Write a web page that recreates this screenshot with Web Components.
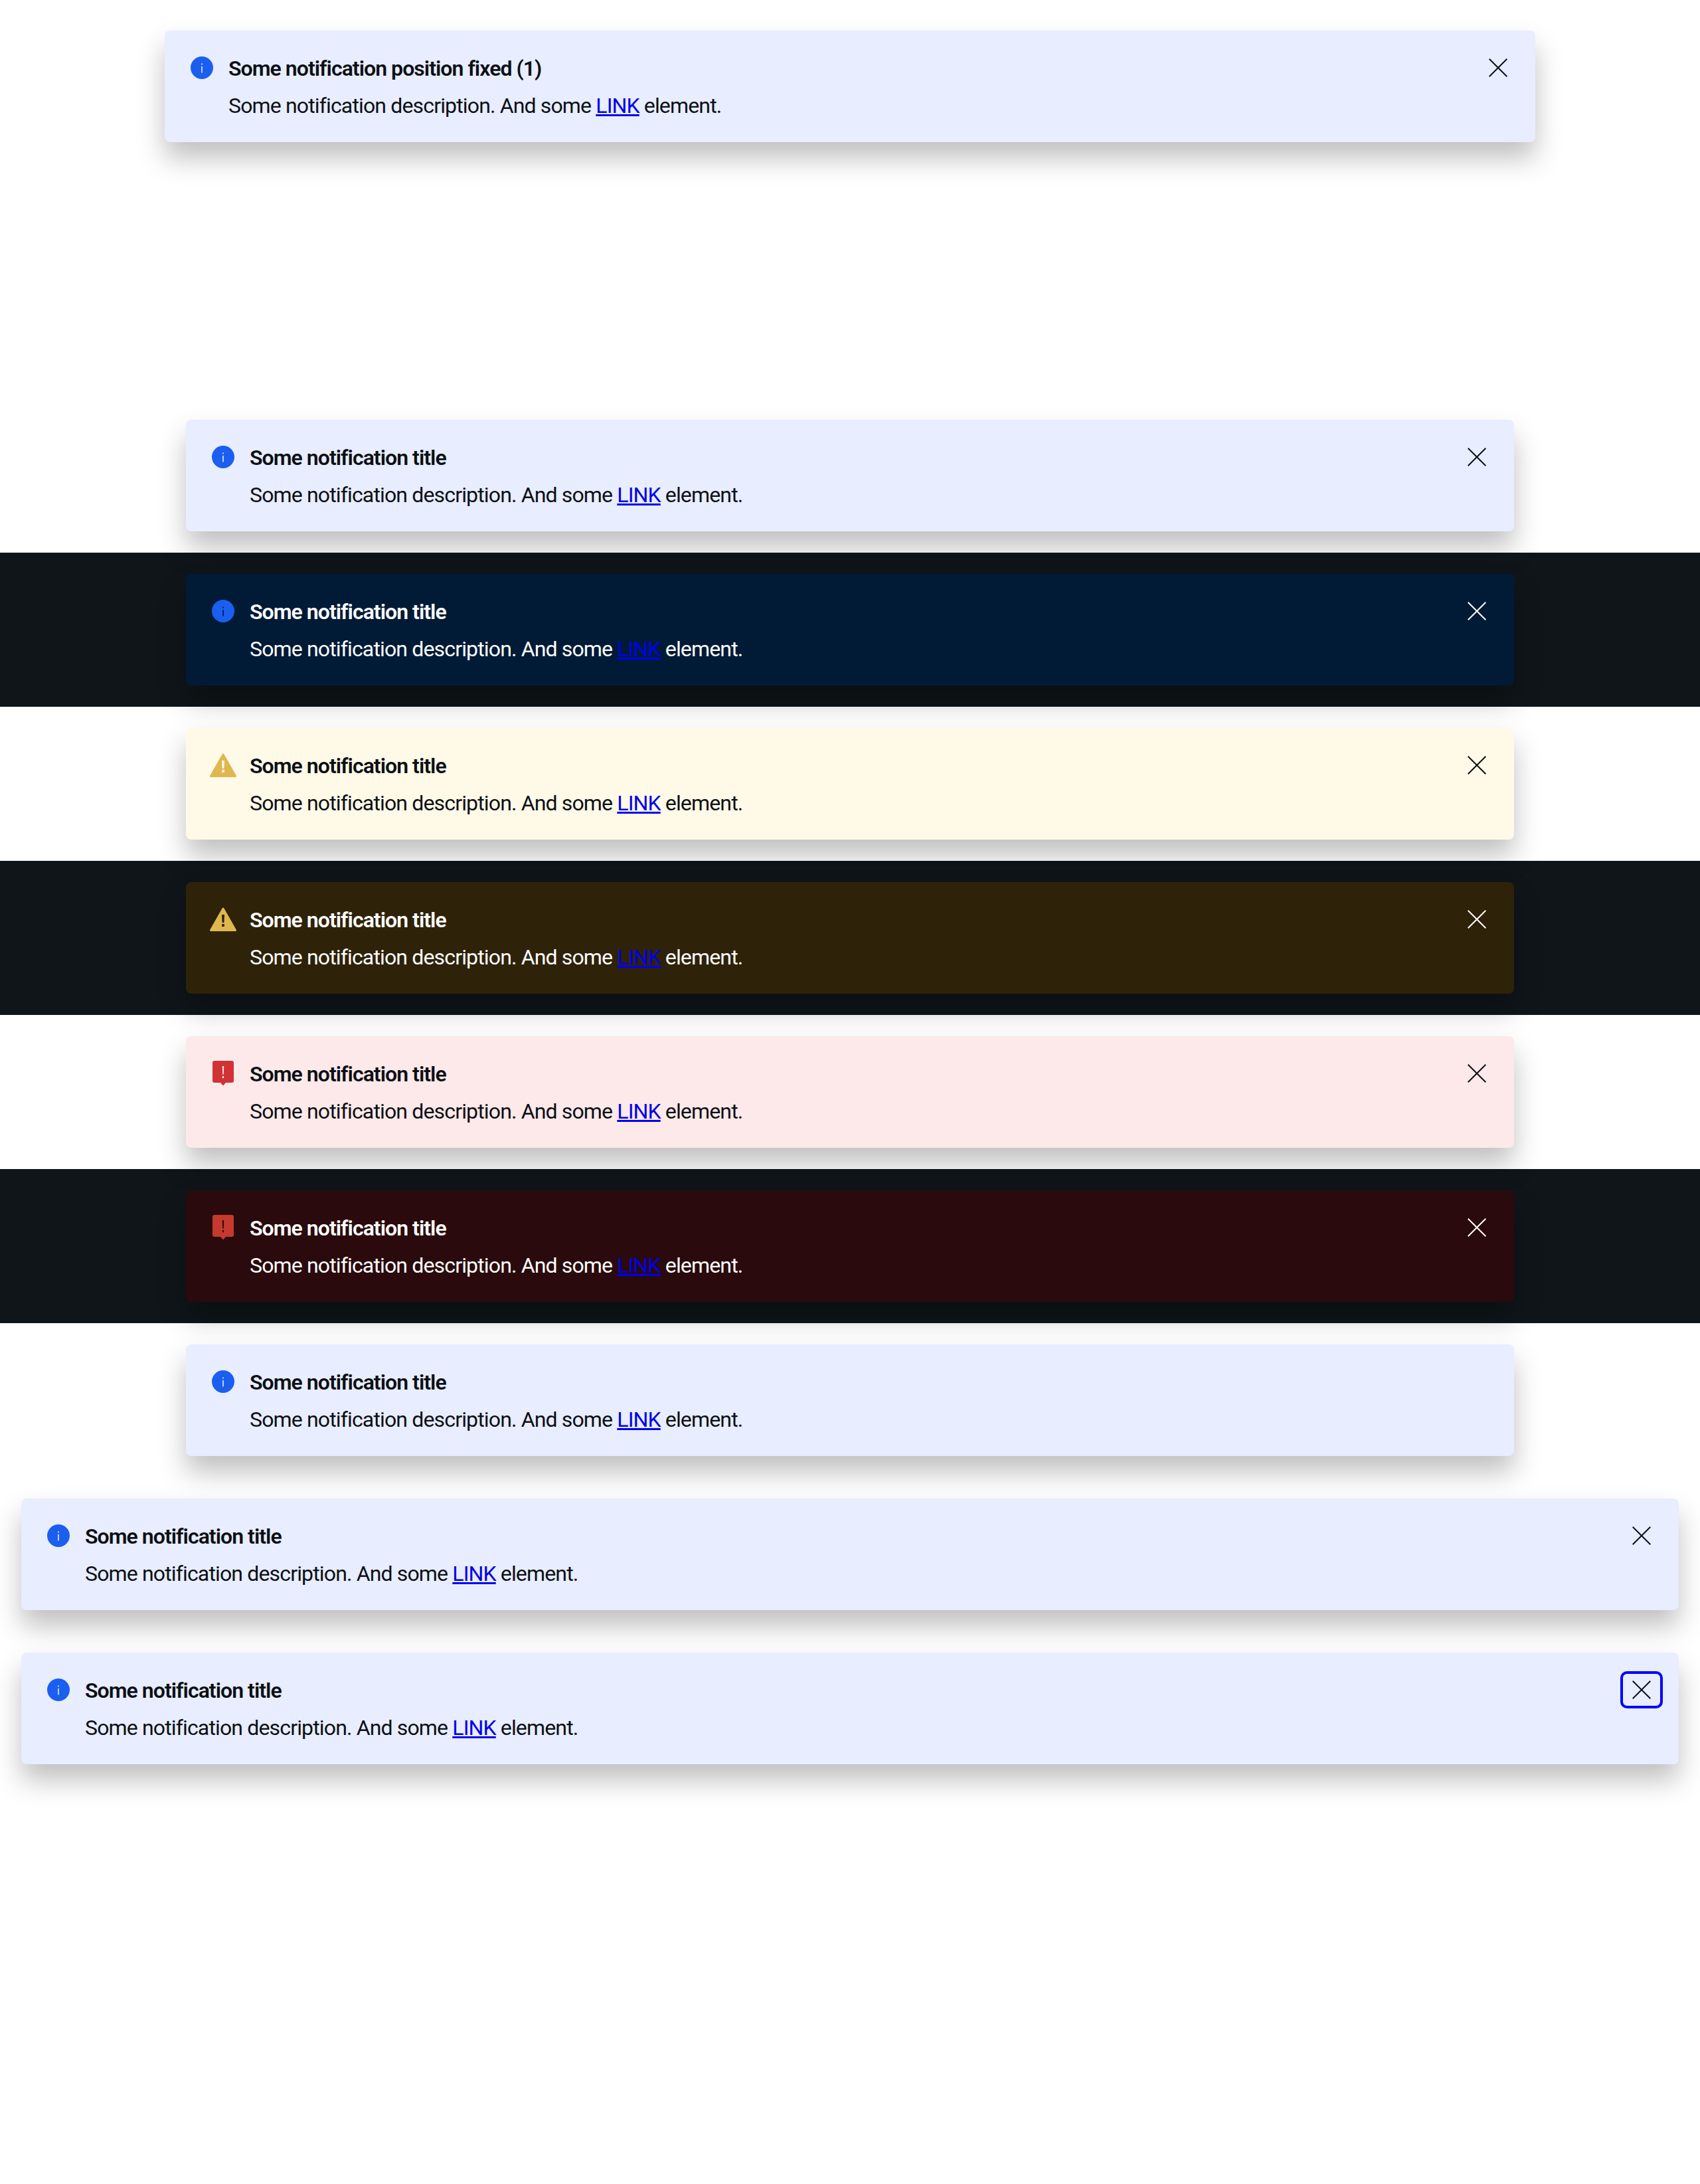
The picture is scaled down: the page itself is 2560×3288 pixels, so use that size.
<!DOCTYPE html>
<html lang="en">
<head>
  <meta charset="UTF-8">
  <title>Notifications</title>
  <style>
    html, body { margin: 0; background: #fff; }
    body { font-family: Roboto, "Liberation Sans", sans-serif; min-height: 3288px; }
    .fixed-spot { height: 600px; padding-top: 46px; box-sizing: border-box; }
  </style>
</head>
<body>
  <template id="rowTpl">
    <style>
      :host { display: flex; justify-content: center; padding: 32px; height: 168px; color: #0c1014; }
      :host([dark]) { background: #0f1519; color: #fff; }
    </style>
    <slot></slot>
  </template>

  <template id="noteTpl">
    <style>
      :host {
        display: flex; flex: 1 1 auto; box-sizing: border-box; height: 168px; max-width: 2000px;
        padding: 32px 28px 32px 32px; gap: 16px; border-radius: 8px;
        background: var(--bg); box-shadow: 0 24px 40px rgba(0,0,0,.25);
        font-size: 32px; line-height: 48px; letter-spacing: -.85px;
        --bg: #e8edff; --mark: #e8edff; --err: #d13236;
      }
      :host([wide]) { max-width: none; }
      :host([pos]) { max-width: 2064px; }
      :host([kind="info"][dark]) { --bg: #011b36; --mark: #011b36; }
      :host([kind="warning"]) { --bg: #fff9e8; --mark: #fff9e8; }
      :host([kind="warning"][dark]) { --bg: #2e2209; --mark: #2e2209; }
      :host([kind="error"]) { --bg: #fde9ea; --mark: #fde9ea; }
      :host([kind="error"][dark]) { --bg: #2a0a0c; --mark: #2a0a0c; --err: #c43a2e; }
      .icon { flex: none; width: 48px; height: 48px; }
      .icon svg { display: block; width: 48px; height: 48px; }
      .body { flex: 1; min-width: 0; display: flex; flex-direction: column; gap: 8px; padding-top: 1px; }
      .title { font-weight: 600; letter-spacing: -.95px; }
      button {
        flex: none; width: 56px; height: 48px; padding: 0; border: 0; background: none;
        color: inherit; display: flex; align-items: center; justify-content: center; border-radius: 6px;
      }
      button svg { display: block; width: 28px; height: 28px; }
      :host([no-close]) button { display: none; }
      :host([focused]) button { outline: 4px solid #00f; }
    </style>
    <div class="icon"></div>
    <div class="body">
      <div class="title"><slot name="title"></slot></div>
      <div><slot></slot></div>
    </div>
    <button type="button" aria-label="Close">
      <svg viewBox="0 0 28 28" fill="none" stroke="currentColor" stroke-width="2"><path d="M.7.7l26.6 26.6M27.3.7L.7 27.3"/></svg>
    </button>
  </template>

  <div class="fixed-spot" style="display:flex;justify-content:center;color:#0c1014">
    <ui-notification kind="info" pos>
      <span slot="title">Some notification position fixed (1)</span>
      Some notification description. And some <a href="#">LINK</a> element.
    </ui-notification>
  </div>

  <demo-row><ui-notification kind="info"><span slot="title">Some notification title</span>Some notification description. And some <a href="#">LINK</a> element.</ui-notification></demo-row>
  <demo-row dark><ui-notification kind="info" dark><span slot="title">Some notification title</span>Some notification description. And some <a href="#">LINK</a> element.</ui-notification></demo-row>
  <demo-row><ui-notification kind="warning"><span slot="title">Some notification title</span>Some notification description. And some <a href="#">LINK</a> element.</ui-notification></demo-row>
  <demo-row dark><ui-notification kind="warning" dark><span slot="title">Some notification title</span>Some notification description. And some <a href="#">LINK</a> element.</ui-notification></demo-row>
  <demo-row><ui-notification kind="error"><span slot="title">Some notification title</span>Some notification description. And some <a href="#">LINK</a> element.</ui-notification></demo-row>
  <demo-row dark><ui-notification kind="error" dark><span slot="title">Some notification title</span>Some notification description. And some <a href="#">LINK</a> element.</ui-notification></demo-row>
  <demo-row><ui-notification kind="info" no-close><span slot="title">Some notification title</span>Some notification description. And some <a href="#">LINK</a> element.</ui-notification></demo-row>
  <demo-row><ui-notification kind="info" wide><span slot="title">Some notification title</span>Some notification description. And some <a href="#">LINK</a> element.</ui-notification></demo-row>
  <demo-row><ui-notification kind="info" wide focused><span slot="title">Some notification title</span>Some notification description. And some <a href="#">LINK</a> element.</ui-notification></demo-row>

  <script>
    // icon artwork for each kind, drawn in a 48 box
    const ICONS = {
      info: `<circle cx="24" cy="24" r="17" fill="#1a5ff0"/>
        <rect x="23.2" y="22" width="1.6" height="9.5" fill="var(--mark)"/>
        <rect x="23.2" y="17.5" width="1.6" height="2" fill="var(--mark)"/>`,
      warning: `<path d="M24 8L42.5 40.5H5.5Z" fill="#dfb74f" stroke="#dfb74f" stroke-width="3" stroke-linejoin="round"/>
        <path d="M22 17h4l-.6 12h-2.8z" fill="var(--mark)"/>
        <rect x="22.2" y="31" width="3.6" height="4" fill="var(--mark)"/>`,
      error: `<path d="M11 5h26a3 3 0 0 1 3 3v27a3 3 0 0 1-3 3h-9l-4 4.5-4-4.5h-9a3 3 0 0 1-3-3V8a3 3 0 0 1 3-3z" fill="var(--err)"/>
        <path d="M22.8 13h2.4l-.4 12.5h-1.6z" fill="var(--mark)"/>
        <rect x="22.9" y="28" width="2.2" height="3.2" fill="var(--mark)"/>`
    };

    class DemoRow extends HTMLElement {
      constructor() {
        super();
        this.attachShadow({ mode: 'open' });
        this.shadowRoot.appendChild(document.getElementById('rowTpl').content.cloneNode(true));
      }
    }

    class UiNotification extends HTMLElement {
      constructor() {
        super();
        this.attachShadow({ mode: 'open' });
        this.shadowRoot.appendChild(document.getElementById('noteTpl').content.cloneNode(true));
      }

      connectedCallback() {
        const kind = this.getAttribute('kind') || 'info';
        this.shadowRoot.querySelector('.icon').innerHTML =
          `<svg viewBox="0 0 48 48">${ICONS[kind]}</svg>`;
      }
    }

    customElements.define('demo-row', DemoRow);
    customElements.define('ui-notification', UiNotification);
  </script>
</body>
</html>
